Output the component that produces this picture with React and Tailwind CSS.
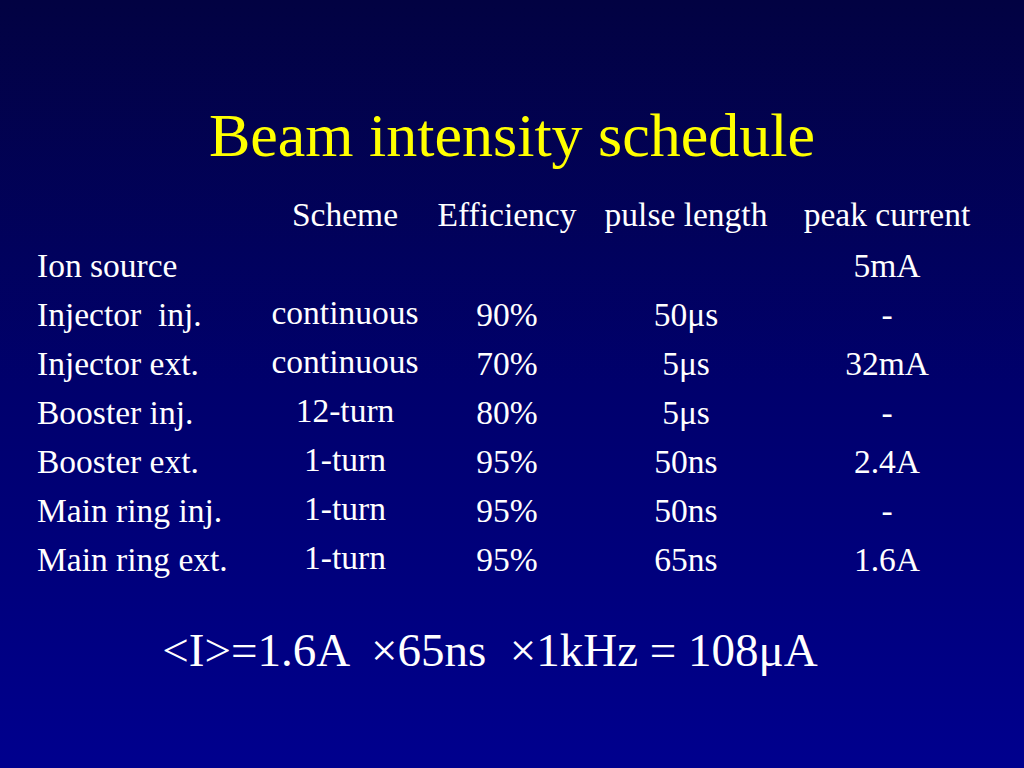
import React from "react";

const rows = [
  { name: "Ion source", scheme: "", eff: "", pulse: "", peak: "5mA" },
  { name: "Injector\u00a0 inj.", scheme: "continuous", eff: "90%", pulse: "50μs", peak: "-" },
  { name: "Injector ext.", scheme: "continuous", eff: "70%", pulse: "5μs", peak: "32mA" },
  { name: "Booster inj.", scheme: "12-turn", eff: "80%", pulse: "5μs", peak: "-" },
  { name: "Booster ext.", scheme: "1-turn", eff: "95%", pulse: "50ns", peak: "2.4A" },
  { name: "Main ring inj.", scheme: "1-turn", eff: "95%", pulse: "50ns", peak: "-" },
  { name: "Main ring ext.", scheme: "1-turn", eff: "95%", pulse: "65ns", peak: "1.6A" },
];

const cols = "grid grid-cols-[223px_170px_154px_204px_198px]";

export default function App() {
  return (
    <div className="w-[1024px] h-[768px] overflow-hidden bg-gradient-to-b from-[#020242] via-[#00006c] to-[#00008e] [font-family:'Liberation_Serif',serif] text-white">
      <h1 className="pt-[104px] text-center text-[62px] leading-none text-[#ffff00]">
        Beam intensity schedule
      </h1>

      <div className="mt-[24px] pl-[37px] text-[33.5px]">
        <div className={`${cols} h-[51px] leading-[49px]`}>
          <div />
          <div className="text-center">Scheme</div>
          <div className="text-center">Efficiency</div>
          <div className="text-center">pulse length</div>
          <div className="text-center">peak current</div>
        </div>
        {rows.map((r, i) => (
          <div key={i} className={`${cols} h-[49px] leading-[49px]`}>
            <div className="whitespace-pre">{r.name}</div>
            <div className="text-center -translate-y-[2px]">{r.scheme}</div>
            <div className="text-center">{r.eff}</div>
            <div className="text-center">{r.pulse}</div>
            <div className="text-center">{r.peak}</div>
          </div>
        ))}
      </div>

      <div className="mt-[43px] flex justify-center pr-[44px] text-[47px] leading-none whitespace-pre">
        {"<I>=1.6A  ×65ns  ×1kHz = 108μA"}
      </div>
    </div>
  );
}
